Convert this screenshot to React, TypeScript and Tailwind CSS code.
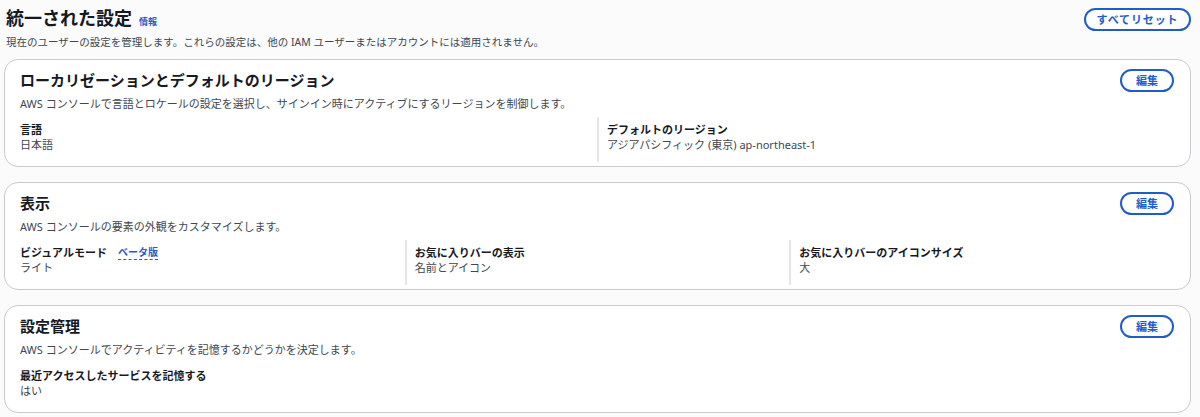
import React from "react";

const FONT = {
  fontFamily: '"Noto Sans", "Noto Sans CJK JP", sans-serif',
};

interface Item {
  label: string;
  value: string;
  badge?: string;
}

interface Section {
  title: string;
  description: string;
  columns: 1 | 2 | 3;
  items: Item[];
}

const sections: Section[] = [
  {
    title: "ローカリゼーションとデフォルトのリージョン",
    description:
      "AWS コンソールで言語とロケールの設定を選択し、サインイン時にアクティブにするリージョンを制御します。",
    columns: 2,
    items: [
      { label: "言語", value: "日本語" },
      { label: "デフォルトのリージョン", value: "アジアパシフィック (東京) ap-northeast-1" },
    ],
  },
  {
    title: "表示",
    description: "AWS コンソールの要素の外観をカスタマイズします。",
    columns: 3,
    items: [
      { label: "ビジュアルモード", value: "ライト", badge: "ベータ版" },
      { label: "お気に入りバーの表示", value: "名前とアイコン" },
      { label: "お気に入りバーのアイコンサイズ", value: "大" },
    ],
  },
  {
    title: "設定管理",
    description: "AWS コンソールでアクティビティを記憶するかどうかを決定します。",
    columns: 1,
    items: [{ label: "最近アクセスしたサービスを記憶する", value: "はい" }],
  },
];

function PillButton({ children, wide }: { children: React.ReactNode; wide?: boolean }) {
  return (
    <button
      type="button"
      className={`flex h-[23px] items-center justify-center rounded-full border-2 border-[#1f5ec8] bg-white text-[11px] font-bold leading-none text-[#1f5ec8] ${
        wide ? "w-[107px] tracking-[0.08em]" : "w-[54px]"
      }`}
    >
      {children}
    </button>
  );
}

function SettingsCard({ section }: { section: Section }) {
  const grid =
    section.columns === 3
      ? "grid-cols-3"
      : section.columns === 2
        ? "grid-cols-2"
        : "grid-cols-1";

  return (
    <section className="rounded-[14px] border border-[#c9cad0] bg-white pl-[15px] pr-[16px] pt-[10px] pb-[4px]">
      <div className="flex items-start justify-between">
        <div>
          <h2 className="text-[15px] font-bold leading-[20px] text-[#16191f]">
            {section.title}
          </h2>
          <p className="mt-[7px] text-[11px] leading-[14px] text-[#414750]">
            {section.description}
          </p>
        </div>
        <div className="-mt-[1px]">
          <PillButton>編集</PillButton>
        </div>
      </div>

      <div className={`mt-[6px] grid ${grid}`}>
        {section.items.map((item, i) => (
          <div
            key={item.label}
            className={
              i === 0
                ? "pr-[8px] pt-[6px] pb-[10px]"
                : "border-l-2 border-[#e4e5e8] pl-[8px] pr-[8px] pt-[6px] pb-[10px]"
            }
          >
            <div className="flex items-center gap-[11px]">
              <span className="text-[11px] font-bold leading-[14px] text-[#16191f]">
                {item.label}
              </span>
              {item.badge && (
                <span className="border-b border-dashed border-[#1f5ec8] text-[10px] font-bold leading-[13px] text-[#1f5ec8]">
                  {item.badge}
                </span>
              )}
            </div>
            <div className="mt-[1px] text-[11px] leading-[14px] text-[#414750]">
              {item.value}
            </div>
          </div>
        ))}
      </div>
    </section>
  );
}

export default function App() {
  return (
    <div
      className="min-h-[417px] w-[1200px] bg-[#fbfbfc] pl-[4px] pr-[9px] pt-[6px]"
      style={FONT}
    >
      <header className="flex items-start justify-between pl-[2px]">
        <div>
          <div className="flex items-baseline gap-[7px]">
            <h1 className="text-[18px] font-bold leading-[24px] text-[#16191f]">
              統一された設定
            </h1>
            <span className="text-[9px] font-bold text-[#1f5ec8]">情報</span>
          </div>
          <p className="mt-[5px] text-[10.5px] leading-[14px] text-[#414750]">
            現在のユーザーの設定を管理します。これらの設定は、他の IAM ユーザーまたはアカウントには適用されません。
          </p>
        </div>
        <div className="pt-[2px]">
          <PillButton wide>すべてリセット</PillButton>
        </div>
      </header>

      <div className="mt-[10px] flex flex-col gap-[15px]">
        {sections.map((s) => (
          <SettingsCard key={s.title} section={s} />
        ))}
      </div>
    </div>
  );
}
